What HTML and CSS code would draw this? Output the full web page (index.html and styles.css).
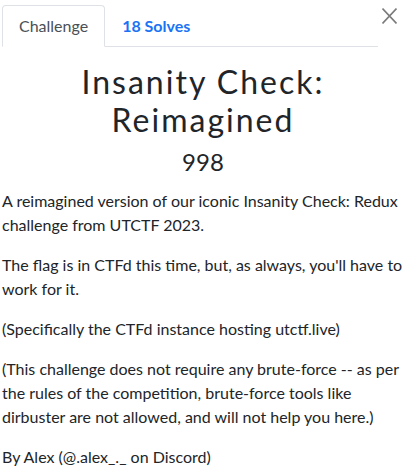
FILE: index.html
```html
<!DOCTYPE html>
<html lang="en">
<head>
<meta charset="utf-8">
<title>Insanity Check: Reimagined</title>
<link rel="stylesheet" href="styles.css">
</head>
<body>
<div class="modal">
  <div class="header">
    <ul class="tabs">
      <li><a class="tab-link active" href="#">Challenge</a></li>
      <li><a class="tab-link solves" href="#">18 Solves</a></li>
    </ul>
    <button class="close" aria-label="Close">
      <svg width="15" height="16" viewBox="0 0 15 16"><path d="M0.5 0.5 L14.5 15.5 M14.5 0.5 L0.5 15.5" stroke="#7b7b7b" stroke-width="1.6" fill="none"/></svg>
    </button>
  </div>
  <div class="content">
    <h2 class="name">Insanity Check: Reimagined</h2>
    <h3 class="value">998</h3>
    <div class="description">
      <p>A reimagined version of our iconic Insanity Check: Redux challenge from UTCTF 2023.</p>
      <p>The flag is in CTFd this time, but, as always, you'll have to work for it.</p>
      <p>(Specifically the CTFd instance hosting utctf.live)</p>
      <p>(This challenge does not require any brute-force -- as per the rules of the competition, brute-force tools like dirbuster are not allowed, and will not help you here.)</p>
      <p>By Alex (@.alex_._ on Discord)</p>
    </div>
  </div>
</div>
</body>
</html>
```
FILE: styles.css
```css
* { box-sizing: border-box; }
html, body { margin: 0; padding: 0; background: #fff; }
body {
  font-family: Lato, "Liberation Sans", sans-serif;
  font-size: 16px;
  line-height: 24px;
  color: #212529;
}
.modal { padding: 5px 2px 0; }
.header { display: flex; align-items: flex-start; }
.tabs {
  flex: 0 0 376px;
  display: flex;
  list-style: none;
  margin: 0;
  padding: 0;
  border-bottom: 1px solid #dee2e6;
}
.tabs li { margin-bottom: -1px; }
.tab-link {
  display: block;
  padding: 8px 16px;
  border: 1px solid transparent;
  border-top-left-radius: 4px;
  border-top-right-radius: 4px;
  text-decoration: none;
  color: #007bff;
  font-size: 16px;
  line-height: 24px;
}
.tab-link.active {
  color: #495057;
  background: #fff;
  border-color: #dee2e6 #dee2e6 #fff;
}
.tab-link.solves { font-weight: 700; color: #1a73f5; }
.close {
  margin-left: auto;
  margin-right: 7px;
  margin-top: 3px;
  padding: 0;
  border: 0;
  background: transparent;
  width: 15px;
  height: 16px;
  display: flex;
}
.content { padding-top: 16px; }
.name {
  margin: 0 0 8px;
  font-size: 32px;
  line-height: 1.2;
  font-weight: 400;
  letter-spacing: 2px;
  text-align: center;
}
.value {
  margin: 0 0 12px;
  font-size: 24px;
  line-height: 1.2;
  font-weight: 400;
  text-align: center;
}
.description p { margin: 0 0 16px; }
```
